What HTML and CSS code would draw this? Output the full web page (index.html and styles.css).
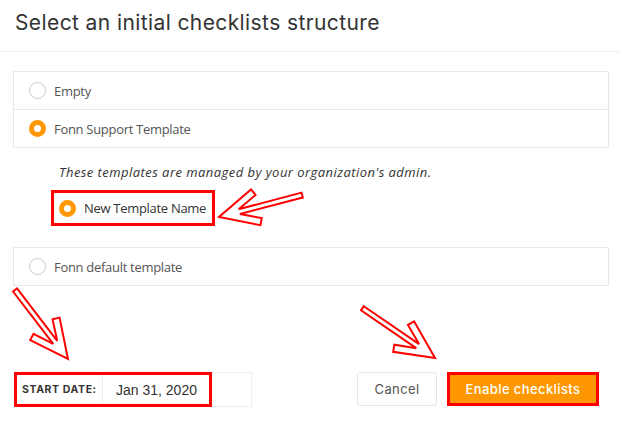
FILE: index.html
```html
<!DOCTYPE html>
<html>
<head>
<meta charset="utf-8">
<link rel="stylesheet" href="styles.css">
</head>
<body>
<div class="dialog">
  <div class="header">
    <h1 class="title">Select an initial checklists structure</h1>
  </div>
  <div class="content">
    <div class="list">
      <div class="row"><span class="radio"></span><span class="label">Empty</span></div>
      <div class="row"><span class="radio checked"></span><span class="label">Fonn Support Template</span></div>
    </div>
    <p class="note">These templates are managed by your organization's admin.</p>
    <div class="org-row">
      <span class="radio checked"></span><span class="label dark">New Template Name</span>
    </div>
    <div class="list list-default">
      <div class="row"><span class="radio"></span><span class="label">Fonn default template</span></div>
    </div>
  </div>
  <div class="footer">
    <div class="date-field">
      <div class="date-label">START DATE:</div>
      <div class="date-value">Jan 31, 2020</div>
    </div>
    <div class="actions">
      <button class="btn btn-cancel">Cancel</button>
      <button class="btn btn-enable">Enable checklists</button>
    </div>
  </div>
  <svg class="arrows" width="619" height="425" viewBox="0 0 619 425">
    <g fill="#fff" stroke="#f00" stroke-width="2" stroke-linejoin="miter">
      <polygon transform="translate(219,217) rotate(165.2)" points="-86,-2.5 -21,-2.5 -41,-12 -38,-18.5 0,0 -38,18.5 -41,12 -21,2.5 -86,2.5"/>
      <polygon transform="translate(68,359) rotate(52.5)" points="-87,-2.5 -21,-2.5 -41,-12 -38,-18.5 0,0 -38,18.5 -41,12 -21,2.5 -87,2.5"/>
      <polygon transform="translate(435,358) rotate(34.4)" points="-88,-2.5 -21,-2.5 -41,-12 -38,-18.5 0,0 -38,18.5 -41,12 -21,2.5 -88,2.5"/>
    </g>
  </svg>
</div>
</body>
</html>
```
FILE: styles.css
```css
html, body {
  margin: 0;
  padding: 0;
  background: #fff;
}
.dialog {
  position: relative;
  width: 619px;
  height: 425px;
  overflow: hidden;
  font-family: "Open Sans", "DejaVu Sans", sans-serif;
}
.header {
  height: 52px;
  border-bottom: 1px solid #eeeeee;
  box-sizing: border-box;
  padding: 9px 0 0 15px;
}
.title {
  margin: 0;
  font-family: Inter, "Liberation Sans", sans-serif;
  font-weight: 400;
  font-size: 21px;
  line-height: 28px;
  color: #333;
  letter-spacing: 0.4px;
}
.content {
  padding: 19px 10px 0 13px;
}
.list {
  border: 1px solid #e9e9e9;
  width: 594px;
}
.row {
  height: 37px;
  display: flex;
  align-items: center;
  padding-left: 15px;
}
.row + .row {
  border-top: 1px solid #e9e9e9;
}
.radio {
  width: 17px;
  height: 17px;
  box-sizing: border-box;
  border: 1px solid #c8c8c8;
  border-radius: 50%;
  background: #fff;
  flex: none;
}
.radio.checked {
  border: 5px solid #ff9800;
  background: #fff;
}
.label {
  margin-left: 8px;
  font-size: 13px;
  color: #555;
  letter-spacing: -0.3px;
}
.label.dark {
  color: #333;
}
.note {
  margin: 15px 0 0 46px;
  font-style: italic;
  font-size: 13px;
  line-height: 18px;
  color: #333;
  letter-spacing: 0.45px;
}
.org-row {
  margin: 9px 0 0 38px;
  width: 164px;
  height: 36px;
  box-sizing: border-box;
  border: 3px solid #f00;
  display: flex;
  align-items: center;
  padding-left: 5px;
}
.list-default {
  margin-top: 21px;
}
.footer {
  margin-top: 86px;
  display: flex;
  justify-content: space-between;
  padding: 0 20px 0 14px;
}
.date-field {
  position: relative;
  width: 238px;
  height: 35px;
  box-sizing: border-box;
  border: 1px solid #eee;
  display: flex;
  align-items: center;
}
.date-field::after {
  content: "";
  position: absolute;
  left: -1px;
  top: -1px;
  width: 198px;
  height: 35px;
  box-sizing: border-box;
  border: 3px solid #f00;
}
.date-label {
  width: 88px;
  height: 100%;
  box-sizing: border-box;
  border-right: 1px solid #eee;
  display: flex;
  align-items: center;
  padding-left: 7px;
  font-family: Inter, "Liberation Sans", sans-serif;
  font-weight: 700;
  font-size: 10.5px;
  color: #333;
  letter-spacing: 0.6px;
}
.date-value {
  padding-left: 13px;
  font-family: "Liberation Sans", Arial, sans-serif;
  font-size: 14px;
  color: #333;
}
.actions {
  display: flex;
  gap: 10px;
}
.btn {
  height: 34px;
  box-sizing: border-box;
  font-family: Inter, "Liberation Sans", sans-serif;
  font-size: 13px;
  border-radius: 3px;
  padding: 0;
  cursor: pointer;
  letter-spacing: 0.4px;
}
.btn-cancel {
  width: 80px;
  background: #fff;
  border: 1px solid #e6e6e6;
  color: #555;
}
.btn-enable {
  width: 152px;
  height: 34px;
  background: #ff9800;
  border: 3px solid #f00;
  border-radius: 0;
  color: #fff;
  font-weight: 500;
}
.arrows {
  position: absolute;
  left: 0;
  top: 0;
  pointer-events: none;
}
```
